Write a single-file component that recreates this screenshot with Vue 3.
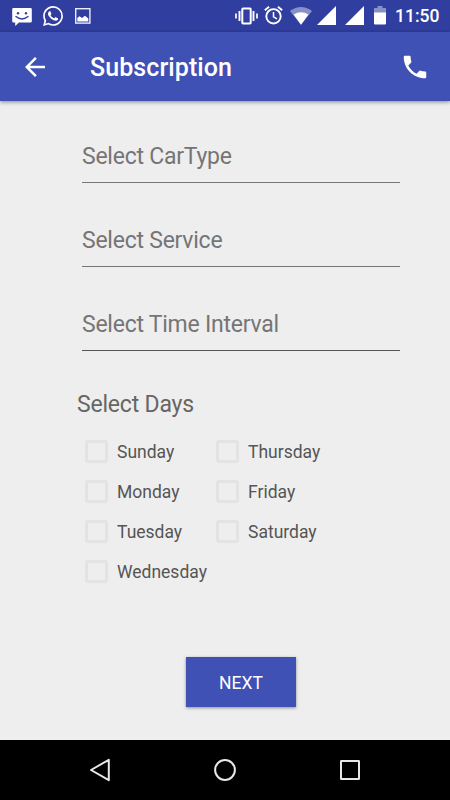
<script setup>
const fields = ['Select CarType', 'Select Service', 'Select Time Interval']
const dayColumns = [
  ['Sunday', 'Monday', 'Tuesday', 'Wednesday'],
  ['Thursday', 'Friday', 'Saturday'],
]
</script>

<template>
  <div class="screen">
    <div class="status">
      <svg class="chat" width="20" height="20" viewBox="0 0 20 20">
        <path fill="#fff" d="M1.500 1H18.500a1.300 1.300 0 0 1 1.300 1.300V14.200a1.300 1.300 0 0 1-1.300 1.300H7L3.200 19V15.500H1.500A1.300 1.300 0 0 1 .2 14.200V2.300A1.300 1.300 0 0 1 1.500 1Z" />
        <circle cx="6" cy="6.300" r="1.200" fill="#303f9f" /><circle cx="14" cy="6.300" r="1.200" fill="#303f9f" />
        <path d="M3.500 9.300Q10 14.600 16.500 9.300" fill="none" stroke="#303f9f" stroke-width="1.400" />
      </svg>
      <svg class="whatsapp" width="20" height="20" viewBox="0 0 24 24" fill="#fff">
        <path d="M17.472 14.382c-.297-.149-1.758-.867-2.030-.967-.273-.099-.471-.148-.670.150-.197.297-.767.966-.940 1.164-.173.199-.347.223-.644.075-.297-.150-1.255-.463-2.390-1.475-.883-.788-1.480-1.761-1.653-2.059-.173-.297-.018-.458.130-.606.134-.133.298-.347.446-.520.149-.174.198-.298.298-.497.099-.198.050-.371-.025-.520-.075-.149-.669-1.612-.916-2.207-.242-.579-.487-.500-.669-.510-.173-.008-.371-.010-.570-.010-.198 0-.520.074-.792.372-.272.297-1.040 1.016-1.040 2.479 0 1.462 1.065 2.875 1.213 3.074.149.198 2.096 3.200 5.077 4.487.709.306 1.262.489 1.694.625.712.227 1.360.195 1.871.118.571-.085 1.758-.719 2.006-1.413.248-.694.248-1.289.173-1.413-.074-.124-.272-.198-.570-.347m-5.421 7.403h-.004a9.870 9.870 0 0 1-5.031-1.378l-.361-.214-3.741.982.998-3.648-.235-.374a9.860 9.860 0 0 1-1.510-5.260c.001-5.450 4.436-9.884 9.888-9.884 2.640 0 5.122 1.030 6.988 2.898a9.825 9.825 0 0 1 2.893 6.994c-.003 5.450-4.437 9.884-9.885 9.884m8.413-18.297A11.815 11.815 0 0 0 12.050 0C5.495 0 .160 5.335.157 11.892c0 2.096.547 4.142 1.588 5.945L.057 24l6.305-1.654a11.882 11.882 0 0 0 5.683 1.448h.005c6.554 0 11.890-5.335 11.893-11.893a11.821 11.821 0 0 0-3.480-8.413Z" />
      </svg>
      <svg class="picture" width="16" height="16" viewBox="0 0 16 16">
        <rect x=".7" y=".7" width="14.200" height="14.400" fill="none" stroke="#fff" stroke-width="1.400" opacity=".9" />
        <path d="M2.300 13.500V10L4.500 8.200 7 10 10 7.800 13.300 10.500V13.500Z" fill="#fff" />
      </svg>
      <div class="grow"></div>
      <svg class="vibrate" width="23" height="18" viewBox="0 0 23 18" fill="none" stroke="#fff">
        <rect x="7.300" y="1.500" width="8.400" height="15" rx=".8" stroke-width="2" />
        <path d="M4.500 4V14M18.500 4V14" stroke-width="1.900" />
        <path d="M1 6.500V11.500M22 6.500V11.500" stroke-width="1.700" />
      </svg>
      <svg class="alarm" width="19" height="19" viewBox="0 0 19 19" fill="none" stroke="#fff">
        <circle cx="9.500" cy="10.300" r="7.200" stroke-width="1.900" />
        <path d="M9.500 6V10.800L13 12.800" stroke-width="1.500" />
        <path d="M.8 4.300L5.100.8M13.900.8L18.200 4.300" stroke-width="1.900" />
      </svg>
      <svg class="wifi" width="22" height="18" viewBox="0 0 22 18">
        <path d="M0 4Q11-4 22 4L11 17.800Z" fill="#8790c9" />
        <path d="M3.600 7.500Q11 3 18.400 7.500L11 17.800Z" fill="#fff" />
      </svg>
      <svg class="signal" width="19" height="19" viewBox="0 0 19 19"><path d="M19 0V19H0Z" fill="#fff" /></svg>
      <svg class="signal second" width="19" height="19" viewBox="0 0 19 19"><path d="M19 0V19H0Z" fill="#fff" /></svg>
      <svg class="battery" width="12" height="19" viewBox="0 0 12 19">
        <path d="M3.500 0H8.500V2H12V7H0V2H3.500Z" fill="#8790c9" />
        <path d="M0 6.500H12V17.500Q12 18.500 11 18.500H1Q0 18.500 0 17.500Z" fill="#fff" />
      </svg>
      <span class="time">11:50</span>
    </div>
    <header class="toolbar">
      <svg class="back" width="30" height="30" viewBox="0 0 24 24"><path fill="#fff" d="M20 11H7.830l5.590-5.590L12 4l-8 8 8 8 1.410-1.410L7.830 13H20v-2z" /></svg>
      <h1>Subscription</h1>
      <svg class="phone" width="30" height="30" viewBox="0 0 24 24"><path fill="#fff" d="M6.620 10.790c1.440 2.830 3.760 5.140 6.590 6.590l2.200-2.200c.27-.27.670-.36 1.020-.24 1.120.37 2.330.57 3.570.57.550 0 1 .450 1 1V20c0 .550-.450 1-1 1-9.390 0-17-7.610-17-17 0-.550.450-1 1-1h3.500c.550 0 1 .450 1 1 0 1.250.200 2.450.570 3.570.110.350.030.740-.250 1.020l-2.200 2.200z" /></svg>
    </header>
    <main>
      <div v-for="field in fields" :key="field" class="field">{{ field }}</div>
      <h2>Select Days</h2>
      <div class="days">
        <div v-for="(column, i) in dayColumns" :key="i" class="column">
          <div v-for="day in column" :key="day" class="day"><span class="box"></span><span class="name">{{ day }}</span></div>
        </div>
      </div>
      <button class="next">NEXT</button>
    </main>
    <nav>
      <svg width="24" height="26" viewBox="0 0 24 26"><path d="M3 13L20.800 2.800V23.200Z" /></svg>
      <svg width="24" height="26" viewBox="0 0 24 26"><circle cx="12" cy="13" r="9.900" /></svg>
      <svg width="24" height="26" viewBox="0 0 24 26"><rect x="3" y="4" width="18" height="18" rx=".3" /></svg>
    </nav>
  </div>
</template>

<style>
body { margin: 0; }
</style>

<style scoped>
.screen { width: 450px; height: 800px; display: flex; flex-direction: column; overflow: hidden; background: #eee; font-family: Roboto, sans-serif; }
svg { display: block; flex: none; }
.status { height: 32px; flex: none; box-sizing: border-box; display: flex; align-items: flex-start; padding: 6px 10px 0 12px; background: #303f9f; }
.chat { margin-top: 1px; }
.whatsapp { margin-left: 11px; }
.picture { margin: 2px 0 0 12px; }
.grow { flex: 1; }
.vibrate { margin-top: 1px; }
.alarm { margin-left: 6px; }
.wifi { margin: 1px 0 0 7px; }
.signal { margin-left: 5px; }
.second { margin-left: 9px; }
.battery { margin-left: 10px; }
.time { width: 45px; margin-left: 9px; color: #fff; font-size: 17.5px; line-height: 21px; font-weight: 500; white-space: nowrap; }
.toolbar { height: 69px; flex: none; display: flex; align-items: center; padding: 0 20px; background: #3f51b5; box-shadow: 0 1px 4px rgba(0, 0, 0, .45); }
h1 { flex: 1; margin: 2px 0 0 40px; color: #fff; font-size: 25px; line-height: 30px; font-weight: 500; letter-spacing: .08px; }
main { flex: 1; display: flex; flex-direction: column; padding: 0 50px 0 77px; }
.field { height: 84px; box-sizing: border-box; margin-left: 5px; padding-top: 42px; color: #757575; font-size: 23px; letter-spacing: -.24px; line-height: 27px; background: linear-gradient(#777, #777) 0 81px / 100% 1px no-repeat; }
.field:nth-child(3) { background-image: linear-gradient(#555, #555); background-position: 0 81px; }
h2 { margin: 38px 0 0; color: #666; font-size: 23px; letter-spacing: -.2px; line-height: 28px; font-weight: 400; }
.days { display: flex; margin: 12px 0 0 8px; height: 160px; }
.column { width: 131px; }
.day { height: 40px; display: flex; align-items: center; gap: 9px; color: #555; font-size: 17.5px; white-space: nowrap; }
.name { padding-top: 2px; }
.box { width: 23px; height: 23px; flex: none; box-sizing: border-box; border: 3px solid #e3e3e3; border-radius: 3px; }
.next { width: 110px; height: 50px; margin: 66px 0 0 109px; padding: 2px 0 0; border: 0; background: #3f51b5; color: #fff; font: 400 17.5px/48px Roboto, sans-serif; box-shadow: 0 1px 3px rgba(0, 0, 0, .4); }
nav { height: 60px; flex: none; box-sizing: border-box; display: flex; align-items: center; justify-content: space-between; padding: 0 88px; background: #000; }
nav svg { fill: none; stroke: #e8e8e8; stroke-width: 2; stroke-linejoin: round; }
</style>
